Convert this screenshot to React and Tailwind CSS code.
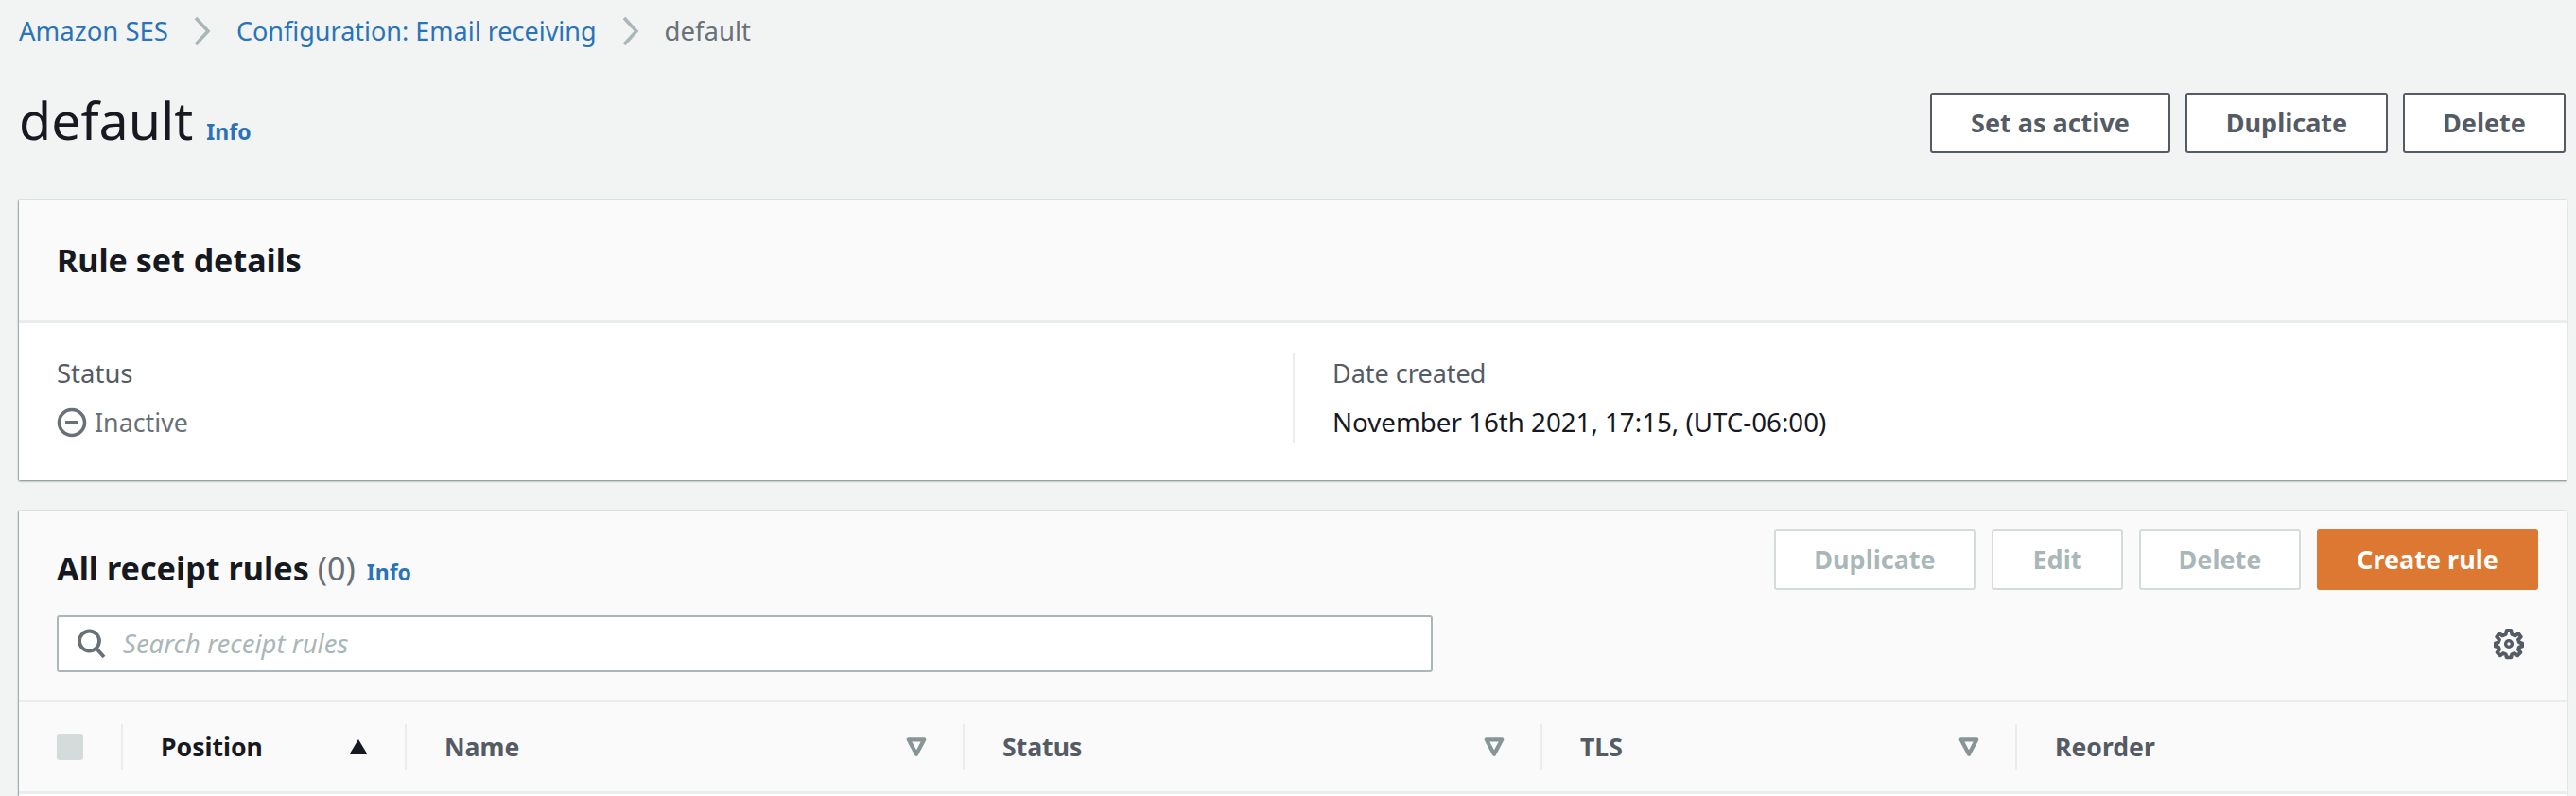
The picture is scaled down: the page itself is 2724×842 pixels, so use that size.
const FONT = "font-['Noto_Sans','Open_Sans',sans-serif]";

function Chevron() {
  return (
    <svg width="20" height="32" viewBox="0 0 20 32" className="shrink-0" fill="none">
      <path d="M3 2 L16 16 L3 30" stroke="#aab7b8" strokeWidth="3.6" />
    </svg>
  );
}

function Btn({ children, w }) {
  return (
    <button className={`h-[64px] ${w} rounded-[3px] border-2 border-[#545b64] bg-white text-[27px] font-bold text-[#545b64]`}>
      {children}
    </button>
  );
}

function DisabledBtn({ children, w }) {
  return (
    <button className={`h-[64px] ${w} rounded-[3px] border-2 border-[#d5dbdb] bg-white text-[27px] font-bold text-[#aab7b8]`}>
      {children}
    </button>
  );
}

function SortDown() {
  return (
    <svg width="22" height="22" viewBox="0 0 20 20" className="shrink-0" fill="none">
      <path d="M2.5 3 H17.5 L10 17 Z" stroke="#879596" strokeWidth="3.8" strokeLinejoin="round" />
    </svg>
  );
}

function SortUp() {
  return (
    <svg width="22" height="18" viewBox="0 0 20 18" className="shrink-0">
      <path d="M10 1 L19 16 Q19 17 18 17 H2 Q1 17 1 16 Z" fill="#16191f" />
    </svg>
  );
}

function Col({ w, label, active, sort }) {
  return (
    <div className={`${w} flex h-[48px] shrink-0 items-center justify-between border-l-2 border-[#eaeded] pl-[40px] pr-[38px]`}>
      <span className={`pt-[2px] text-[26.6px] font-bold ${active ? "text-[#16191f]" : "text-[#545b64]"}`}>{label}</span>
      {sort === "up" && <SortUp />}
      {sort === "down" && <SortDown />}
    </div>
  );
}

export default function App() {
  return (
    <div className={`h-[842px] w-[2724px] overflow-hidden bg-[#f2f3f3] pl-[20px] pr-[10px] ${FONT}`}>
      <nav className="flex h-[66px] items-center text-[27.5px]">
        <a className="text-[#2a73b8]">Amazon SES</a>
        <span className="mx-[26px]"><Chevron /></span>
        <a className="text-[27px] text-[#2a73b8]">Configuration: Email receiving</a>
        <span className="mx-[26px]"><Chevron /></span>
        <span className="text-[#687078]">default</span>
      </nav>

      <header className="mt-[32px] flex h-[64px] items-center justify-between">
        <div className="-mt-[6px] flex items-baseline gap-[14px]">
          <h1 className="text-[55.5px] font-normal leading-[64px] text-[#16191f]">default</h1>
          <a className="text-[23px] font-bold text-[#2a73b8]">Info</a>
        </div>
        <div className="flex gap-[16px] pr-[1px]">
          <Btn w="w-[254px]">Set as active</Btn>
          <Btn w="w-[214px]">Duplicate</Btn>
          <Btn w="w-[172px]">Delete</Btn>
        </div>
      </header>

      <section className="mt-[50px] bg-white shadow-[0_1px_2px_rgba(0,28,36,0.5),1px_0_1px_rgba(0,28,36,0.1),-1px_0_1px_rgba(0,28,36,0.2)]">
        <div className="flex h-[130px] items-center border-b-[3px] border-[#eaeded] bg-[#fafafa] pl-[40px]">
          <h2 className="text-[34px] font-bold text-[#16191f]">Rule set details</h2>
        </div>
        <div className="flex h-[166px] pt-[31px]">
          <div className="w-[1347px] pl-[40px]">
            <div className="text-[27.5px] leading-[44px] text-[#545b64]">Status</div>
            <div className="mt-[8px] flex h-[44px] items-center gap-[8px] text-[26.8px] text-[#687078]">
              <svg width="32" height="32" viewBox="0 0 32 32" fill="none">
                <circle cx="16" cy="16" r="13.5" stroke="#687078" strokeWidth="3.6" />
                <path d="M9 16 H23" stroke="#687078" strokeWidth="4" />
              </svg>
              Inactive
            </div>
          </div>
          <div className="h-[96px] border-l-2 border-[#eaeded] pl-[40px]">
            <div className="text-[27px] leading-[44px] text-[#545b64]">Date created</div>
            <div className="mt-[8px] flex h-[44px] items-center text-[27.7px] text-[#16191f]">
              November 16th 2021, 17:15, (UTC-06:00)
            </div>
          </div>
        </div>
      </section>

      <section className="mt-[33px] bg-[#fafafa] shadow-[0_1px_2px_rgba(0,28,36,0.5),1px_0_1px_rgba(0,28,36,0.1),-1px_0_1px_rgba(0,28,36,0.2)]">
        <div className="h-[202px] border-b-[3px] border-[#eaeded] pl-[40px] pr-[30px] pt-[19px]">
          <div className="flex h-[64px] items-start justify-between">
            <div className="flex items-baseline gap-[12px] pt-[19px]">
              <h2 className="text-[34.2px] font-bold leading-[44px] text-[#16191f]">
                All receipt rules <span className="font-normal text-[#687078]">(0)</span>
              </h2>
              <a className="text-[23px] font-bold text-[#2a73b8]">Info</a>
            </div>
            <div className="flex gap-[17px]">
              <DisabledBtn w="w-[213px]">Duplicate</DisabledBtn>
              <DisabledBtn w="w-[139px]">Edit</DisabledBtn>
              <DisabledBtn w="w-[171px]">Delete</DisabledBtn>
              <button className="h-[64px] w-[234px] rounded-[3px] bg-[#dd7833] text-[27px] font-bold text-white">Create rule</button>
            </div>
          </div>
          <div className="mt-[27px] flex items-start justify-between">
            <div className="flex h-[60px] w-[1455px] items-center gap-[17px] rounded-[3px] border-2 border-[#aab7b8] bg-white pl-[19px]">
              <svg width="32" height="32" viewBox="0 0 32 32" fill="none" className="shrink-0">
                <circle cx="13.5" cy="13" r="10.5" stroke="#687078" strokeWidth="3.8" />
                <path d="M21 21 L29 30" stroke="#687078" strokeWidth="3.8" />
              </svg>
              <span className="text-[27.5px] italic text-[#aab7b8]">Search receipt rules</span>
            </div>
            <svg width="32" height="34" viewBox="0 0 16 16" fill="none" className="mr-[15px] mt-[13px] shrink-0">
              <path
                d="M6.8 1 H9.2 L9.6 3 L11.4 3.7 L13.1 2.6 L14.4 4.3 L13 5.8 L13.5 7.2 L15.2 7.8 V9.2 L13.4 9.8 L13 11 L14.2 12.6 L12.6 14.2 L11 13 L9.6 13.6 L9.2 15.2 H6.8 L6.4 13.6 L5 13 L3.4 14.2 L1.8 12.6 L3 11 L2.6 9.8 L0.8 9.2 V7.8 L2.5 7.2 L3 5.8 L1.6 4.3 L2.9 2.6 L4.6 3.7 L6.4 3 Z"
                stroke="#545b64" strokeWidth="1.9" strokeLinejoin="round"
              />
              <circle cx="8" cy="8" r="1.7" stroke="#545b64" strokeWidth="1.7" />
            </svg>
          </div>
        </div>
        <div className="flex h-[97px] items-center border-b-[3px] border-[#eaeded]">
          <div className="flex w-[108px] shrink-0 pl-[40px]">
            <div className="h-[28px] w-[28px] rounded-[3px] bg-[#d5dbdb]" />
          </div>
          <Col w="w-[300px]" label="Position" active sort="up" />
          <Col w="w-[590px]" label="Name" sort="down" />
          <Col w="w-[611px]" label="Status" sort="down" />
          <Col w="w-[502px]" label="TLS" sort="down" />
          <Col w="flex-1" label="Reorder" />
        </div>
        <div className="h-[20px] bg-white" />
      </section>
    </div>
  );
}
